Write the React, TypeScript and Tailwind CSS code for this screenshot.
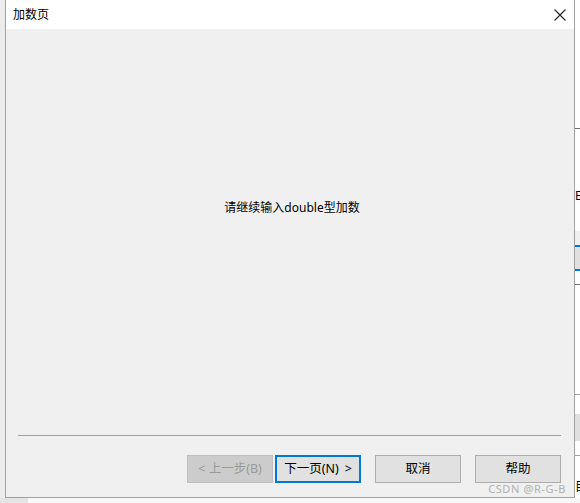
export default function App() {
  const font = { fontFamily: '"Noto Sans", "Noto Sans CJK SC", sans-serif' };

  return (
    <div className="w-[580px] h-[503px] flex flex-col bg-white overflow-hidden text-[12px] text-black" style={font}>
      <div className="flex h-[498px]">
        {/* left strip of the desktop behind */}
        <div className="w-[5px] bg-[#ececec]" />

        {/* dialog window */}
        <div className="relative w-[570px] flex flex-col border-x border-b border-[#a0a0a0]">
          <div className="h-[29px] bg-white flex items-center justify-between pl-[7px] pr-[7px]">
            <span className="leading-none">加数页</span>
            <svg width="14" height="14" viewBox="0 0 14 14" className="text-[#222]">
              <path d="M1.5 1.5 L12.5 12.5 M12.5 1.5 L1.5 12.5" stroke="currentColor" strokeWidth="1.1" fill="none" />
            </svg>
          </div>

          <div className="flex-1 bg-[#f0f0f0] flex flex-col">
            <div className="pt-[171px] text-center pl-[4px] leading-[16px]">请继续输入double型加数</div>

            <div className="flex-1" />

            <div className="ml-[12px] mr-[13px] h-px bg-[#a0a0a0]" />

            <div className="flex justify-end pr-[13px] pt-[19px] pb-[14px] text-[12.5px]">
              <button className="w-[86px] h-[28px] bg-[#cccccc] border border-[#bfbfbf] text-[#9a9a9a] flex items-center justify-center">
                &lt; 上一步(B)
              </button>
              <button className="ml-[2px] w-[86px] h-[28px] bg-[#e1e1e1] border-2 border-[#0078d7] flex items-center justify-center gap-[6px]">
                <span>下一页(N)</span>
                <span>&gt;</span>
              </button>
              <button className="ml-[14px] w-[86px] h-[28px] bg-[#e1e1e1] border border-[#adadad] flex items-center justify-center">
                取消
              </button>
              <button className="ml-[14px] w-[86px] h-[28px] bg-[#e1e1e1] border border-[#adadad] flex items-center justify-center">
                帮助
              </button>
            </div>
          </div>

          {/* watermark over the window */}
          <div className="absolute right-[8px] bottom-[1px] text-[11px] leading-[14px] text-[#b0b0b0] tracking-[0.6px]">
            CSDN @R-G-B
          </div>
        </div>

        {/* right strip of the app behind */}
        <div className="w-[5px] flex flex-col bg-white overflow-hidden">
          <div className="h-[128px]" />
          <div className="h-px bg-[#707070]" />
          <div className="h-[61px]" />
          <div className="h-[11px] text-[12px] leading-[11px] text-black">E</div>
          <div className="h-[30px]" />
          <div className="h-[14px] bg-[#f0f0f0]" />
          <div className="h-[2px] bg-[#0078d7]" />
          <div className="h-[22px] bg-[#e0e0e0]" />
          <div className="h-[2px] bg-[#0078d7]" />
          <div className="h-[13px]" />
          <div className="h-px bg-[#707070]" />
          <div className="h-[109px]" />
          <div className="h-px bg-[#a0a0a0]" />
          <div className="h-[19px]" />
          <div className="h-[27px] bg-[#e0e0e0]" />
          <div className="h-[14px]" />
          <div className="h-px bg-[#a0a0a0]" />
          <div className="h-[24px]" />
          <div className="h-[13px] text-[12px] leading-[13px]">目</div>
        </div>
      </div>

      {/* bottom strip of the desktop behind */}
      <div className="h-[5px] flex">
        <div className="w-[28px] bg-[#e4e4e4]" />
        <div className="flex-1 bg-[#f8f8f8]" />
      </div>
    </div>
  );
}
